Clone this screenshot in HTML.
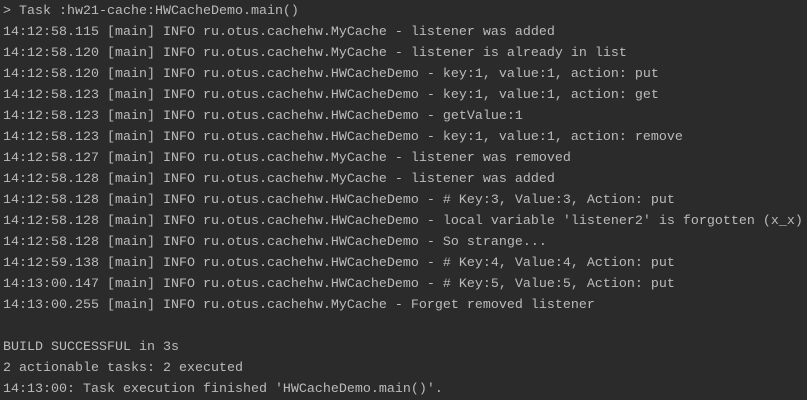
<!DOCTYPE html>
<html><head><style>
html,body{margin:0;padding:0;background:#2b2b2b;width:807px;height:400px;overflow:hidden}
pre{margin:0;padding:1px 0 0 3px;font-family:"Liberation Mono",monospace;font-size:13.33px;line-height:21px;color:#bbbbbb;white-space:pre}
</style></head><body><pre>&gt; Task :hw21-cache:HWCacheDemo.main()
14:12:58.115 [main] INFO ru.otus.cachehw.MyCache - listener was added
14:12:58.120 [main] INFO ru.otus.cachehw.MyCache - listener is already in list
14:12:58.120 [main] INFO ru.otus.cachehw.HWCacheDemo - key:1, value:1, action: put
14:12:58.123 [main] INFO ru.otus.cachehw.HWCacheDemo - key:1, value:1, action: get
14:12:58.123 [main] INFO ru.otus.cachehw.HWCacheDemo - getValue:1
14:12:58.123 [main] INFO ru.otus.cachehw.HWCacheDemo - key:1, value:1, action: remove
14:12:58.127 [main] INFO ru.otus.cachehw.MyCache - listener was removed
14:12:58.128 [main] INFO ru.otus.cachehw.MyCache - listener was added
14:12:58.128 [main] INFO ru.otus.cachehw.HWCacheDemo - # Key:3, Value:3, Action: put
14:12:58.128 [main] INFO ru.otus.cachehw.HWCacheDemo - local variable 'listener2' is forgotten (x_x)
14:12:58.128 [main] INFO ru.otus.cachehw.HWCacheDemo - So strange...
14:12:59.138 [main] INFO ru.otus.cachehw.HWCacheDemo - # Key:4, Value:4, Action: put
14:13:00.147 [main] INFO ru.otus.cachehw.HWCacheDemo - # Key:5, Value:5, Action: put
14:13:00.255 [main] INFO ru.otus.cachehw.MyCache - Forget removed listener

BUILD SUCCESSFUL in 3s
2 actionable tasks: 2 executed
14:13:00: Task execution finished 'HWCacheDemo.main()'.
</pre></body></html>
